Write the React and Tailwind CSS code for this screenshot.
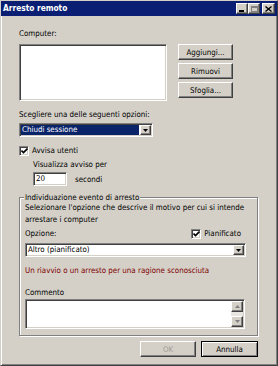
const sunken =
  'border border-t-[#808080] border-l-[#808080] border-b-white border-r-white shadow-[inset_1px_1px_0_#404040,inset_-1px_-1px_0_#d4d0c8]';
const raised =
  'border border-t-white border-l-white border-b-[#404040] border-r-[#404040] shadow-[inset_-1px_-1px_0_#808080]';

const Arrow = ({ up = false, gray = false }) => (
  <svg width="5" height="3" viewBox="0 0 5 3" className={up ? 'rotate-180' : ''}>
    <path d="M0 0h5L2.5 3z" fill={gray ? '#808080' : '#000'} />
  </svg>
);

const ArrowBtn = ({ className = '', up = false, gray = false }) => (
  <div className={`flex items-center justify-center bg-[#d4d0c8] ${raised} ${className}`}>
    <Arrow up={up} gray={gray} />
  </div>
);

const Combo = ({ text, selected, className = '' }) => (
  <div className={`flex h-[14px] bg-white ${sunken} ${className}`}>
    <div className="flex flex-1 p-[1px]">
      <span
        className={`flex-1 pl-[1px] leading-[10px] ${
          selected ? 'bg-[#0a246a] text-white' : 'text-black'
        }`}
      >
        {text}
      </span>
    </div>
    <ArrowBtn className="w-[11px] my-[1px] mr-[1px]" />
  </div>
);

const Check = ({ className = '' }) => (
  <div className={`flex items-center justify-center w-[10px] h-[10px] bg-white ${sunken} ${className}`}>
    <svg width="7" height="6" viewBox="0 0 7 6">
      <path d="M0.5 2.5 L2.5 4.5 L6.5 0.5" stroke="#000" strokeWidth="1.6" fill="none" />
    </svg>
  </div>
);

const Button = ({ children, className = '', disabled = false, isDefault = false }) => (
  <div
    className={`flex items-center justify-center h-[16px] bg-[#d4d0c8] ${
      isDefault
        ? 'border border-black shadow-[inset_1px_1px_0_#fff,inset_-1px_-1px_0_#808080]'
        : raised
    } ${disabled ? 'text-[#a09c94]' : 'text-black'} ${className}`}
  >
    {children}
  </div>
);

const TitleBtn = ({ children, className = '' }) => (
  <div className={`flex items-center justify-center w-[12px] h-[11px] bg-[#d4d0c8] ${raised} ${className}`}>
    {children}
  </div>
);

export default function App() {
  return (
    <div className="w-[278px] h-[366px] bg-[#d4d0c8] border border-t-[#d4d0c8] border-l-[#d4d0c8] border-r-[#404040] border-b-[#404040] shadow-[inset_1px_1px_0_#fff,inset_-1px_-1px_0_#808080] font-['DejaVu_Sans_Condensed','Liberation_Sans',Arial,sans-serif] text-[7.9px] leading-[13px] text-black flex flex-col">
      {/* Title bar */}
      <div className="flex items-center h-[15px] bg-[#0a1f74] pl-[2px] pr-[2px]">
        <span className="flex-1 text-white font-bold text-[8.3px]">Arresto remoto</span>
        <TitleBtn>
          <div className="w-[5px] h-[2px] bg-black mt-[5px] -ml-[1px]" />
        </TitleBtn>
        <TitleBtn>
          <div className="w-[7px] h-[6px] border border-t-2 border-[#808080]" />
        </TitleBtn>
        <TitleBtn className="ml-[2px] w-[13px]">
          <svg width="7" height="6" viewBox="0 0 7 6">
            <path d="M0.5 0.5 L6.5 5.5 M6.5 0.5 L0.5 5.5" stroke="#000" strokeWidth="1.4" />
          </svg>
        </TitleBtn>
      </div>

      {/* Body */}
      <div className="flex flex-col pl-[18px] pr-[19px]">
        <div className="mt-[11px]">Computer:</div>
        <div className="flex mt-[4px]">
          <div className={`w-[148px] h-[57px] bg-white ${sunken}`} />
          <div className="flex flex-col gap-[3px] ml-[11px]">
            <Button className="w-[55px]">Aggiungi...</Button>
            <Button className="w-[55px]">Rimuovi</Button>
            <Button className="w-[55px]">Sfoglia...</Button>
          </div>
        </div>

        <div className="mt-[7px]">Scegliere una delle seguenti opzioni:</div>
        <Combo text="Chiudi sessione" selected className="w-[134px] mt-[2px]" />

        <div className="flex items-center mt-[7px] h-[13px]">
          <Check />
          <span className="ml-[3px]">Avvisa utenti</span>
        </div>

        <div className="ml-[14px] mt-[1px]">Visualizza avviso per</div>
        <div className="flex items-center ml-[14px] mt-[1px]">
          <div className={`w-[34px] h-[14px] bg-white pl-[2px] leading-[12px] ${sunken}`}>20</div>
          <span className="ml-[8px]">secondi</span>
        </div>

        {/* Group box */}
        <div className="relative mt-[11px] border border-[#808080] shadow-[inset_1px_1px_0_#fff,1px_1px_0_#fff] pl-[5px] pr-[10px] pt-[4px] pb-[6px]">
          <span className="absolute -top-[7px] left-[4px] px-[1px] bg-[#d4d0c8]">
            Individuazione evento di arresto
          </span>
          <p className="leading-[12px] -mr-[8px]">
            Selezionare l'opzione che descrive il motivo per cui si intende arrestare i computer
          </p>
          <div className="flex items-center mt-[1px] h-[13px]">
            <span className="flex-1">Opzione:</span>
            <Check />
            <span className="ml-[3px] mr-[6px]">Pianificato</span>
          </div>
          <Combo text="Altro (pianificato)" className="w-[221px] mt-[3px]" />
          <div className="mt-[7px] text-[#800000]">Un riavvio o un arresto per una ragione sconosciuta</div>
          <div className="mt-[10px] leading-[12px]">Commento</div>
          <div className={`flex justify-end w-[220px] h-[30px] bg-white ${sunken} p-[1px]`}>
            <div className="flex flex-col justify-between w-[12px] bg-[#e8e6e1]">
              <ArrowBtn up gray className="h-[11px]" />
              <ArrowBtn gray className="h-[11px]" />
            </div>
          </div>
        </div>

        <div className="flex justify-end gap-[5px] mt-[5px]">
          <Button disabled className="w-[56px]">OK</Button>
          <Button isDefault className="w-[57px]">Annulla</Button>
        </div>
      </div>
    </div>
  );
}
